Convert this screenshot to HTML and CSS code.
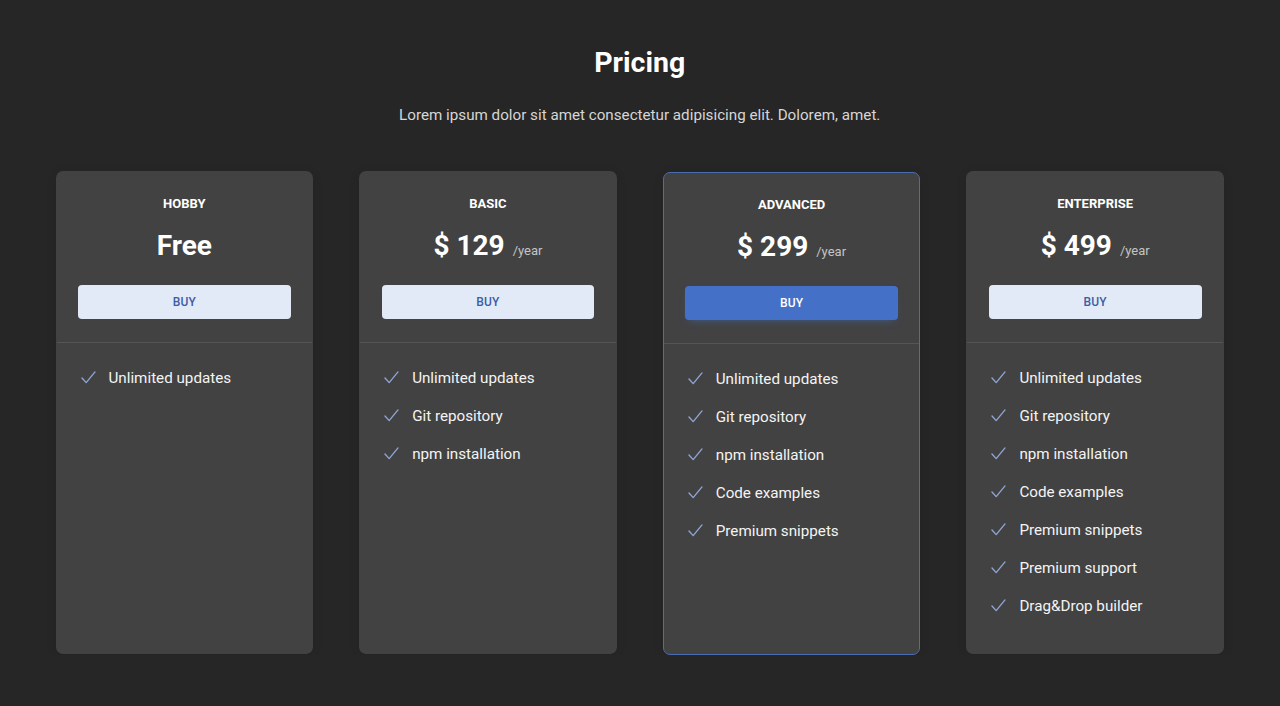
FILE: index.html
```html
<!DOCTYPE html>
<html lang="en">
<head>
<meta charset="utf-8">
<title>Pricing</title>
<link rel="stylesheet" href="styles.css">
</head>
<body>
<section class="pricing">
  <h1 class="title">Pricing</h1>
  <p class="lead">Lorem ipsum dolor sit amet consectetur adipisicing elit. Dolorem, amet.</p>
  <div class="plans">
    <div class="card">
      <div class="card-head">
        <div class="plan-name">HOBBY</div>
        <div class="price">Free</div>
        <button class="buy">BUY</button>
      </div>
      <ul class="features">
        <li><svg class="check" viewBox="0 0 16 14"><polyline points="1,7.5 5.5,12.5 15,1"/></svg>Unlimited updates</li>
      </ul>
    </div>
    <div class="card">
      <div class="card-head">
        <div class="plan-name">BASIC</div>
        <div class="price">$ 129 <small>/year</small></div>
        <button class="buy">BUY</button>
      </div>
      <ul class="features">
        <li><svg class="check" viewBox="0 0 16 14"><polyline points="1,7.5 5.5,12.5 15,1"/></svg>Unlimited updates</li>
        <li><svg class="check" viewBox="0 0 16 14"><polyline points="1,7.5 5.5,12.5 15,1"/></svg>Git repository</li>
        <li><svg class="check" viewBox="0 0 16 14"><polyline points="1,7.5 5.5,12.5 15,1"/></svg>npm installation</li>
      </ul>
    </div>
    <div class="card featured">
      <div class="card-head">
        <div class="plan-name">ADVANCED</div>
        <div class="price">$ 299 <small>/year</small></div>
        <button class="buy primary">BUY</button>
      </div>
      <ul class="features">
        <li><svg class="check" viewBox="0 0 16 14"><polyline points="1,7.5 5.5,12.5 15,1"/></svg>Unlimited updates</li>
        <li><svg class="check" viewBox="0 0 16 14"><polyline points="1,7.5 5.5,12.5 15,1"/></svg>Git repository</li>
        <li><svg class="check" viewBox="0 0 16 14"><polyline points="1,7.5 5.5,12.5 15,1"/></svg>npm installation</li>
        <li><svg class="check" viewBox="0 0 16 14"><polyline points="1,7.5 5.5,12.5 15,1"/></svg>Code examples</li>
        <li><svg class="check" viewBox="0 0 16 14"><polyline points="1,7.5 5.5,12.5 15,1"/></svg>Premium snippets</li>
      </ul>
    </div>
    <div class="card">
      <div class="card-head">
        <div class="plan-name">ENTERPRISE</div>
        <div class="price">$ 499 <small>/year</small></div>
        <button class="buy">BUY</button>
      </div>
      <ul class="features">
        <li><svg class="check" viewBox="0 0 16 14"><polyline points="1,7.5 5.5,12.5 15,1"/></svg>Unlimited updates</li>
        <li><svg class="check" viewBox="0 0 16 14"><polyline points="1,7.5 5.5,12.5 15,1"/></svg>Git repository</li>
        <li><svg class="check" viewBox="0 0 16 14"><polyline points="1,7.5 5.5,12.5 15,1"/></svg>npm installation</li>
        <li><svg class="check" viewBox="0 0 16 14"><polyline points="1,7.5 5.5,12.5 15,1"/></svg>Code examples</li>
        <li><svg class="check" viewBox="0 0 16 14"><polyline points="1,7.5 5.5,12.5 15,1"/></svg>Premium snippets</li>
        <li><svg class="check" viewBox="0 0 16 14"><polyline points="1,7.5 5.5,12.5 15,1"/></svg>Premium support</li>
        <li><svg class="check" viewBox="0 0 16 14"><polyline points="1,7.5 5.5,12.5 15,1"/></svg>Drag&amp;Drop builder</li>
      </ul>
    </div>
  </div>
</section>
</body>
</html>
```

FILE: styles.css
```css
* { box-sizing: border-box; }
html, body {
  margin: 0;
  padding: 0;
  background: #262626;
  color: #fff;
  font-family: Roboto, "Liberation Sans", sans-serif;
}
.pricing {
  padding: 44px 56px 0 55.5px;
  text-align: center;
}
.title {
  margin: 0;
  font-size: 28.5px;
  font-weight: 700;
  line-height: 38px;
}
.lead {
  margin: 21px 0 0;
  font-size: 15.2px;
  line-height: 24px;
  color: #d6d6d6;
}
.plans {
  margin-top: 44px;
  display: grid;
  grid-template-columns: repeat(4, 1fr);
  column-gap: 46px;
}
.card {
  background: #424242;
  border-radius: 7px;
  height: 483px;
  border: 1px solid transparent;
  box-shadow: 0 2px 12px rgba(0,0,0,0.08);
}
.card.featured {
  border-color: #4a6cb3;
  margin-top: 1px;
}
.card-head {
  padding: 21.5px 21.5px 23px;
  border-bottom: 1px solid #555;
}
.plan-name {
  font-size: 13px;
  font-weight: 700;
  line-height: 19.5px;
}
.price {
  margin-top: 15.5px;
  font-size: 28px;
  font-weight: 700;
  line-height: 33.6px;
  height: 33.6px;
}
.price small {
  font-size: 13px;
  font-weight: 400;
  line-height: 1;
  color: #c4c4c4;
  margin-left: 1px;
}
.buy {
  display: block;
  width: 100%;
  margin-top: 22.5px;
  height: 34px;
  padding-top: 1px;
  border: 0;
  border-radius: 4px;
  background: #e3eaf7;
  color: #3b5ea6;
  font-family: inherit;
  font-size: 12px;
  font-weight: 500;
  letter-spacing: 0.2px;
  cursor: pointer;
}
.buy.primary {
  background: #4470c7;
  color: #fff;
  box-shadow: 0 4px 9px -4px rgba(59,113,202,0.6);
}
.features {
  list-style: none;
  margin: 0;
  padding: 24px 22px 0 24px;
  text-align: left;
}
.features li {
  display: flex;
  align-items: center;
  font-size: 15.2px;
  line-height: 22.5px;
  margin-bottom: 15.5px;
  color: #f4f4f4;
}
.check {
  width: 15px;
  height: 13px;
  margin-right: 13px;
  flex: none;
  fill: none;
  stroke: #8ea4d2;
  stroke-width: 1.5;
  stroke-linecap: round;
  stroke-linejoin: round;
}
```
